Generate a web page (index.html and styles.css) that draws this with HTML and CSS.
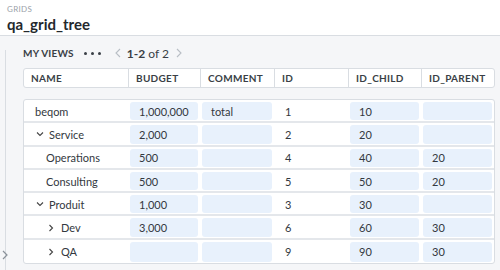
FILE: index.html
```html
<!DOCTYPE html>
<html lang="en">
<head>
  <meta charset="UTF-8">
  <title>qa_grid_tree</title>
  <link rel="stylesheet" href="styles.css">
</head>
<body>
  <header class="page-header">
    <div class="crumb">GRIDS</div>
    <h1 class="title">qa_grid_tree</h1>
  </header>
  <div class="main">
    <div class="side-rail">
      <svg class="rail-toggle" width="6" height="10" viewBox="0 0 6 10"><polyline points="1,1 5,5 1,9" fill="none" stroke="#8a9199" stroke-width="1.2"/></svg>
    </div>
    <div class="content">
      <div class="views-bar">
        <span class="views-label">MY VIEWS</span>
        <span class="dots"><i></i><i></i><i></i></span>
        <svg class="pager-arrow" width="6" height="10" viewBox="0 0 6 10"><polyline points="5,1 1,5 5,9" fill="none" stroke="#b8bec5" stroke-width="1.1"/></svg>
        <span class="pager"><b>1-2</b> of 2</span>
        <svg class="pager-arrow" width="6" height="10" viewBox="0 0 6 10"><polyline points="1,1 5,5 1,9" fill="none" stroke="#b8bec5" stroke-width="1.1"/></svg>
      </div>

      <div class="grid-head">
        <div class="hcell">NAME</div>
        <div class="hcell">BUDGET</div>
        <div class="hcell">COMMENT</div>
        <div class="hcell">ID</div>
        <div class="hcell">ID_CHILD</div>
        <div class="hcell">ID_PARENT</div>
      </div>

      <div class="grid-body" id="grid-body"></div>
    </div>
  </div>
  <script>
    // lignes de l'arbre : niveau, état (open/closed/leaf), valeurs
    const rows = [
      { name: 'beqom', level: 0, state: 'none', budget: '1,000,000', comment: 'total', id: '1', child: '10', parent: '' },
      { name: 'Service', level: 1, state: 'open', budget: '2,000', comment: '', id: '2', child: '20', parent: '' },
      { name: 'Operations', level: 2, state: 'leaf', budget: '500', comment: '', id: '4', child: '40', parent: '20' },
      { name: 'Consulting', level: 2, state: 'leaf', budget: '500', comment: '', id: '5', child: '50', parent: '20' },
      { name: 'Produit', level: 1, state: 'open', budget: '1,000', comment: '', id: '3', child: '30', parent: '' },
      { name: 'Dev', level: 2, state: 'closed', budget: '3,000', comment: '', id: '6', child: '60', parent: '30' },
      { name: 'QA', level: 2, state: 'closed', budget: '', comment: '', id: '9', child: '90', parent: '30' }
    ];
    const down = '<svg class="caret" width="8" height="8" viewBox="0 0 8 8"><polyline points="1,2.5 4,5.5 7,2.5" fill="none" stroke="#444" stroke-width="1.1"/></svg>';
    const right = '<svg class="caret" width="8" height="8" viewBox="0 0 8 8"><polyline points="2.5,1 5.5,4 2.5,7" fill="none" stroke="#444" stroke-width="1.1"/></svg>';
    document.getElementById('grid-body').innerHTML = rows.map(r => {
      let lead = '';
      if (r.state === 'open') lead = down;
      if (r.state === 'closed') lead = right;
      return `<div class="row">
        <div class="cell name lvl-${r.level} ${r.state}">${lead}<span>${r.name}</span></div>
        <div class="cell edit">${r.budget}</div>
        <div class="cell edit">${r.comment}</div>
        <div class="cell">${r.id}</div>
        <div class="cell edit">${r.child}</div>
        <div class="cell edit">${r.parent}</div>
      </div>`;
    }).join('');
  </script>
</body>
</html>
```

FILE: styles.css
```css
:root {
  --bg: #f5f6f8;
  --line: #d9dde2;
  --text: #333840;
  --muted: #9aa1a9;
  --edit: #e8f1fc;
}
* {
  box-sizing: border-box;
}
body {
  margin: 0;
  background: var(--bg);
  color: var(--text);
  font-family: Lato, 'Noto Sans', Arial, sans-serif;
  width: 500px;
  height: 270px;
  overflow: hidden;
}
.page-header {
  background: #fff;
  height: 36px;
  padding: 4px 7px 0 7px;
  border-bottom: 1px solid var(--line);
}
.crumb {
  font-size: 8px;
  color: var(--muted);
  letter-spacing: 0.3px;
  line-height: 10px;
}
.title {
  margin: 1px 0 0 0;
  font-size: 15px;
  font-weight: 700;
  color: #24282d;
  letter-spacing: 0;
  line-height: 18px;
}
.main {
  display: flex;
  height: 234px;
}
.side-rail {
  width: 8px;
  margin-top: 14px;
  border-right: 1px solid var(--line);
  position: relative;
}
.rail-toggle {
  position: absolute;
  left: 2px;
  top: 200px;
}
.content {
  flex: 1;
  padding-left: 17px;
  padding-right: 5px;
}
.views-bar {
  height: 32px;
  display: flex;
  align-items: center;
  padding-top: 2px;
}
.views-label {
  font-size: 10px;
  font-weight: 700;
  color: #3a3f46;
  letter-spacing: 0.2px;
}
.dots {
  display: flex;
  gap: 4px;
  margin-left: 10px;
  margin-right: 14px;
}
.dots i {
  width: 3px;
  height: 3px;
  border-radius: 50%;
  background: #3a3f46;
}
.pager {
  font-size: 12px;
  color: #3a3f46;
  margin: 0 7px 0 6px;
}
.pager b {
  font-weight: 700;
}
.grid-head {
  display: grid;
  grid-template-columns: 104px 72px 74px 74px 73px 73px;
  background: #fff;
  border: 1px solid var(--line);
  border-radius: 3px;
  height: 20px;
}
.hcell {
  font-size: 10px;
  font-weight: 700;
  color: #3a3f46;
  padding-left: 7px;
  line-height: 18px;
  letter-spacing: 0.3px;
  border-left: 1px solid var(--line);
}
.hcell:first-child {
  border-left: none;
}
.grid-body {
  margin-top: 11px;
  border: 1px solid var(--line);
  border-radius: 3px;
  background: #fff;
  overflow: hidden;
}
.row {
  display: grid;
  grid-template-columns: 104px 72px 74px 74px 73px 73px;
  height: 23.3px;
  border-bottom: 2px solid #e4e7eb;
}
.row:last-child {
  border-bottom: none;
}
.cell {
  font-size: 11px;
  color: var(--text);
  display: flex;
  align-items: center;
  margin: 2px 2px 1px 2px;
  padding-left: 9px;
  border-radius: 3px;
}
.cell.edit {
  background: var(--edit);
}
.cell.name {
  margin-left: 0;
  padding-left: 11px;
}
.caret {
  margin-right: 5px;
}
.name.lvl-1 {
  padding-left: 12px;
}
.name.lvl-2.leaf {
  padding-left: 22px;
}
.name.lvl-2.closed {
  padding-left: 23px;
}
.name.closed .caret {
  margin-right: 6px;
}
```
